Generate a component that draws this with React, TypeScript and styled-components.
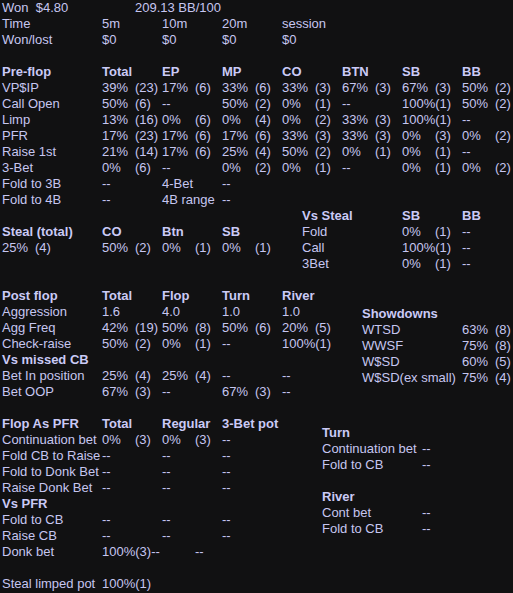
import styled, { createGlobalStyle } from "styled-components";

type V = string | [string, string] | undefined;

const GlobalStyle = createGlobalStyle`
  body {
    margin: 0;
    background: #111112;
    color: #c6c6f0;
    font-family: "Liberation Sans", Arial, sans-serif;
    font-size: 13px;
  }
`;

const Page = styled.div`
  padding-left: 2px;
  min-height: 593px;
  background: #111112;
`;

const Row = styled.div<{ $head?: boolean }>`
  display: flex;
  height: 16px;
  line-height: 16px;
  white-space: pre;
  font-weight: ${(p) => (p.$head ? "bold" : "normal")};
  color: ${(p) => (p.$head ? "#cacaf6" : "#c6c6f0")};
`;

const Blank = styled.div`
  height: 16px;
`;

const Label = styled.div<{ $w?: number }>`
  flex: none;
  display: flex;
  width: ${(p) => p.$w ?? 100}px;
`;

const Cell = styled.div`
  flex: none;
  display: flex;
  width: 60px;
`;

const Pct = styled.span`
  flex: none;
  min-width: 33px;
`;

const Count = styled.span`
  flex: none;
`;

const Split = styled.div`
  display: flex;
  align-items: flex-start;
`;

const Block = styled.div<{ $left?: number; $top?: number }>`
  margin-left: ${(p) => p.$left ?? 0}px;
  margin-top: ${(p) => p.$top ?? 0}px;
`;

const Value = ({ v }: { v: V }) =>
  Array.isArray(v) ? (
    <>
      <Pct>{v[0]}</Pct>
      <Count>{v[1]}</Count>
    </>
  ) : (
    <>{v}</>
  );

const Line = ({ label, cells = [], head }: { label: V; cells?: V[]; head?: boolean }) => (
  <Row $head={head}>
    <Label>
      <Value v={label} />
    </Label>
    {cells.map((c, i) => (
      <Cell key={i}>
        <Value v={c} />
      </Cell>
    ))}
  </Row>
);

const preflop: [string, V[]][] = [
  ["VP$IP", [["39%", "(23)"], ["17%", "(6)"], ["33%", "(6)"], ["33%", "(3)"], ["67%", "(3)"], ["67%", "(3)"], ["50%", "(2)"]]],
  ["Call Open", [["50%", "(6)"], "--", ["50%", "(2)"], ["0%", "(1)"], "--", ["100%", "(1)"], ["50%", "(2)"]]],
  ["Limp", [["13%", "(16)"], ["0%", "(6)"], ["0%", "(4)"], ["0%", "(2)"], ["33%", "(3)"], ["100%", "(1)"], "--"]],
  ["PFR", [["17%", "(23)"], ["17%", "(6)"], ["17%", "(6)"], ["33%", "(3)"], ["33%", "(3)"], ["0%", "(3)"], ["0%", "(2)"]]],
  ["Raise 1st", [["21%", "(14)"], ["17%", "(6)"], ["25%", "(4)"], ["50%", "(2)"], ["0%", "(1)"], ["0%", "(1)"], "--"]],
  ["3-Bet", [["0%", "(6)"], "--", ["0%", "(2)"], ["0%", "(1)"], "--", ["0%", "(1)"], ["0%", "(2)"]]],
  ["Fold to 3B", ["--", "4-Bet", "--"]],
  ["Fold to 4B", ["--", "4B range", "--"]],
];

const postflop: [string, V[], boolean?][] = [
  ["Aggression", ["1.6", "4.0", "1.0", "1.0"]],
  ["Agg Freq", [["42%", "(19)"], ["50%", "(8)"], ["50%", "(6)"], ["20%", "(5)"]]],
  ["Check-raise", [["50%", "(2)"], ["0%", "(1)"], "--", ["100%", "(1)"]]],
  ["Vs missed CB", [], true],
  ["Bet In position", [["25%", "(4)"], ["25%", "(4)"], "--", "--"]],
  ["Bet OOP", [["67%", "(3)"], "--", ["67%", "(3)"], "--"]],
];

const showdowns: [string, V][] = [
  ["WTSD", ["63%", "(8)"]],
  ["WWSF", ["75%", "(8)"]],
  ["W$SD", ["60%", "(5)"]],
  ["W$SD(ex small)", ["75%", "(4)"]],
];

const flopPfr: [string, V[], boolean?][] = [
  ["Continuation bet", [["0%", "(3)"], ["0%", "(3)"], "--"]],
  ["Fold CB to Raise", ["--", "--", "--"]],
  ["Fold to Donk Bet", ["--", "--", "--"]],
  ["Raise Donk Bet", ["--", "--", "--"]],
  ["Vs PFR", [], true],
  ["Fold to CB", ["--", "--", "--"]],
  ["Raise CB", ["--", "--", "--"]],
  ["Donk bet", [["100%", "(3)--"], ["", "--"]]],
];

export default function App() {
  return (
    <Page>
      <GlobalStyle />
      <Line label="Won  $4.80" cells={[["", "209.13 BB/100"]]} />
      <Line label="Time" cells={["5m", "10m", "20m", "session"]} />
      <Line label="Won/lost" cells={["$0", "$0", "$0", "$0"]} />
      <Blank />

      <Line head label="Pre-flop" cells={["Total", "EP", "MP", "CO", "BTN", "SB", "BB"]} />
      {preflop.map(([l, c]) => (
        <Line key={l} label={l} cells={c} />
      ))}

      <Split>
        <Block $top={16}>
          <Line head label="Steal (total)" cells={["CO", "Btn", "SB"]} />
          <Line label={["25%", "(4)"]} cells={[["50%", "(2)"], ["0%", "(1)"], ["0%", "(1)"]]} />
        </Block>
        <Block $left={20}>
          <Line head label="Vs Steal" cells={["SB", "BB"]} />
          <Line label="Fold" cells={[["0%", "(1)"], "--"]} />
          <Line label="Call" cells={[["100%", "(1)"], "--"]} />
          <Line label="3Bet" cells={[["0%", "(1)"], "--"]} />
        </Block>
      </Split>
      <Blank />

      <Split>
        <Block>
          <Line head label="Post flop" cells={["Total", "Flop", "Turn", "River"]} />
          {postflop.map(([l, c, h]) => (
            <Line key={l} head={h} label={l} cells={c} />
          ))}
        </Block>
        <Block $left={20} $top={18}>
          <Line head label="Showdowns" />
          {showdowns.map(([l, v]) => (
            <Line key={l} label={l} cells={[v]} />
          ))}
        </Block>
      </Split>
      <Blank />

      <Split>
        <Block>
          <Line head label="Flop As PFR" cells={["Total", "Regular", "3-Bet pot"]} />
          {flopPfr.map(([l, c, h]) => (
            <Line key={l} head={h} label={l} cells={c} />
          ))}
        </Block>
        <Block $left={40} $top={9}>
          <Line head label="Turn" />
          <Line label="Continuation bet" cells={["--"]} />
          <Line label="Fold to CB" cells={["--"]} />
          <Blank />
          <Line head label="River" />
          <Line label="Cont bet" cells={["--"]} />
          <Line label="Fold to CB" cells={["--"]} />
        </Block>
      </Split>
      <Blank />

      <Line label="Steal limped pot" cells={[["100%", "(1)"]]} />
    </Page>
  );
}
